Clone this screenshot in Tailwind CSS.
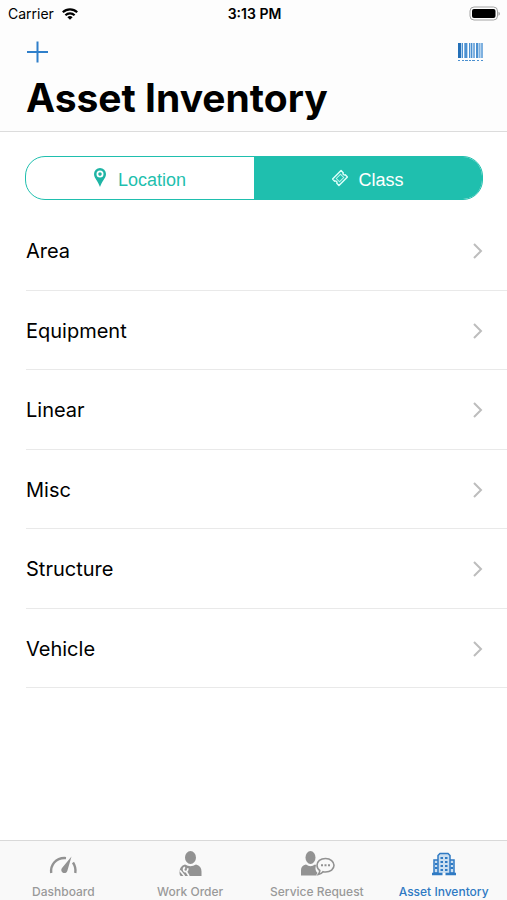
<!DOCTYPE html>
<html lang="en">
<head>
  <meta charset="UTF-8">
  <meta name="viewport" content="width=device-width, initial-scale=1.0">
  <title>Asset Inventory</title>
  <script src="https://cdn.jsdelivr.net/npm/@tailwindcss/browser@4"></script>
</head>
<body class="flex min-h-screen flex-col bg-white font-['Inter','Liberation_Sans',sans-serif] text-black">
  <header class="border-b border-[#dcdcdc] bg-[#fdfdfd]">
    <!-- status bar -->
    <div class="grid h-7 grid-cols-3 items-center pr-1.5 pl-2 text-sm">
      <div class="flex items-center gap-2">
        <span>Carrier</span>
        <svg class="h-3 w-4" viewBox="0 0 16 12" fill="none" stroke="#000" stroke-width="2.2">
          <path d="M0.8 4.3a10.4 10.4 0 0 1 14.4 0" />
          <path d="M3.4 7.2a6.6 6.6 0 0 1 9.2 0" />
          <path d="M8 11.8 5.4 9.2a3.8 3.8 0 0 1 5.2 0z" fill="#000" stroke="none" />
        </svg>
      </div>
      <span class="text-center font-semibold">3:13 PM</span>
      <svg class="h-4 w-8 justify-self-end" viewBox="0 0 32 16">
        <rect x="1" y="1" width="27.500" height="13" rx="4" fill="#fff" stroke="#a3a3a3" />
        <rect x="3" y="3" width="23.500" height="9" rx="2" fill="#000" />
        <path d="M29.500 5.800v4c1.800-.6 1.800-3.400 0-4z" fill="#999" />
      </svg>
    </div>
    <div class="flex h-12 items-center justify-between px-6">
      <button type="button" aria-label="Add asset">
        <svg class="size-7" viewBox="0 0 28 28" stroke="#2f7fca" stroke-width="2">
          <path d="M13.500 3.500v21M3 14h21" />
        </svg>
      </button>
      <button type="button" aria-label="Scan barcode">
        <svg class="h-5 w-6.5" viewBox="0 0 26 20">
          <path fill="#b5d3ee" d="M4 1h22v15H4z" />
          <path fill="#2470b8" d="M1 1h3v15H1z" />
          <path fill="#4b90d0" d="M5 1h1v15H5zM8 1h2v15H8zM12 1h1v15h-1zM14 1h1v15h-1zM19 1h2v15h-2z" />
          <path fill="#7fb1e0" d="M7 1h1v15H7zM16 1h2v15h-2zM22 1h1v15h-1zM24 1h2v15h-2z" />
          <path fill="#fff" d="M6 1h1v15H6zM11 1h1v15h-1zM18 1h1v15h-1z" />
          <path fill="#4b90d0" d="M1 18h2v1H1zM5 18h2v1H5zM8 18h3v1H8zM12 18h2v1h-2zM15 18h3v1h-3zM20 18h2v1h-2zM24 18h2v1h-2z" />
        </svg>
      </button>
    </div>
    <h1 class="px-6.5 pb-[11px] text-[39px] leading-11 font-bold">Asset Inventory</h1>
  </header>

  <main class="flex-1">
    <div class="px-6 pt-6 pb-[11px]">
      <div class="ml-px flex h-11 overflow-hidden rounded-[20px] border border-[#1fbfae] font-['Liberation_Sans',Arial,sans-serif] text-lg">
        <button type="button" class="flex flex-1 items-center justify-center gap-3 pt-1 text-[#1fbfae]">
          <svg class="mb-1 h-5 w-3" viewBox="0 0 12 20">
            <path fill="#1fb5a5" fill-rule="evenodd" d="M6 0a6 6 0 0 0-6 6c0 4 4 7 6 13 2-6 6-9 6-13a6 6 0 0 0-6-6zm0 2.600a3.500 3.500 0 1 1 0 7 3.500 3.500 0 0 1 0-7zm0 1.700a1.800 1.800 0 1 0 0 3.600 1.800 1.800 0 0 0 0-3.600z" />
          </svg>
          Location
        </button>
        <button type="button" class="flex flex-1 items-center justify-center gap-2.5 bg-[#1fbfae] pt-1 text-white" aria-pressed="true">
          <svg class="mb-1 h-5 w-4" viewBox="0 0 16 20" fill="none" stroke="#dcfffa">
            <g transform="rotate(-45 8 10)">
              <path stroke-width="1.500" stroke-linejoin="round" d="M2 5.500h12v3a1.600 1.600 0 0 0 0 3v3H2v-3a1.600 1.600 0 0 0 0-3z" />
              <rect x="5" y="7.700" width="6" height="4.600" stroke-opacity=".8" />
            </g>
          </svg>
          Class
        </button>
      </div>
    </div>

    <nav aria-label="Asset classes">
      <ul class="grid h-[477px] auto-rows-fr pl-6.5 text-xl">
        <li class="border-b border-[#e9e9e9]"><a href="#area" class="flex h-full items-center justify-between pt-0.5 pr-6">Area
          <svg class="h-4 w-2.5" viewBox="0 0 10 16" fill="none" stroke="#bdbdbd" stroke-width="2"><path d="m1 1 7 7-7 7" /></svg></a></li>
        <li class="border-b border-[#e9e9e9]"><a href="#equipment" class="flex h-full items-center justify-between pt-0.5 pr-6">Equipment
          <svg class="h-4 w-2.5" viewBox="0 0 10 16" fill="none" stroke="#bdbdbd" stroke-width="2"><path d="m1 1 7 7-7 7" /></svg></a></li>
        <li class="border-b border-[#e9e9e9]"><a href="#linear" class="flex h-full items-center justify-between pt-0.5 pr-6">Linear
          <svg class="h-4 w-2.5" viewBox="0 0 10 16" fill="none" stroke="#bdbdbd" stroke-width="2"><path d="m1 1 7 7-7 7" /></svg></a></li>
        <li class="border-b border-[#e9e9e9]"><a href="#misc" class="flex h-full items-center justify-between pt-0.5 pr-6">Misc
          <svg class="h-4 w-2.5" viewBox="0 0 10 16" fill="none" stroke="#bdbdbd" stroke-width="2"><path d="m1 1 7 7-7 7" /></svg></a></li>
        <li class="border-b border-[#e9e9e9]"><a href="#structure" class="flex h-full items-center justify-between pt-0.5 pr-6">Structure
          <svg class="h-4 w-2.5" viewBox="0 0 10 16" fill="none" stroke="#bdbdbd" stroke-width="2"><path d="m1 1 7 7-7 7" /></svg></a></li>
        <li class="border-b border-[#e9e9e9]"><a href="#vehicle" class="flex h-full items-center justify-between pt-0.5 pr-6">Vehicle
          <svg class="h-4 w-2.5" viewBox="0 0 10 16" fill="none" stroke="#bdbdbd" stroke-width="2"><path d="m1 1 7 7-7 7" /></svg></a></li>
      </ul>
    </nav>
  </main>

  <!-- tab bar -->
  <nav aria-label="Main" class="grid grid-cols-4 border-t border-[#d9d9d9] bg-[#f9f9f9] pt-[9px] text-xs font-medium text-[#999]">
    <a href="#dashboard" class="flex flex-col items-center gap-1.5">
      <svg class="h-7 w-9" viewBox="0 0 36 28" fill="none" stroke="#929292">
        <path stroke-width="2.400" d="M6.200 23q-.8-6 3-10.500 4.500-5 11.800-4.400M28 12.500q3.200 5 2.300 10.500" />
        <path fill="#929292" stroke="none" d="M26.500 6.500 22.300 21a3.100 3.100 0 1 1-5.300-3z" />
      </svg>
      <span>Dashboard</span>
    </a>
    <a href="#work-order" class="flex flex-col items-center gap-1.5">
      <svg class="h-7 w-9" viewBox="0 0 36 28" fill="#929292">
        <ellipse cx="18.500" cy="7.500" rx="5.500" ry="6.500" />
        <path d="M13 14.500q5.500 3.500 11 0 5.500 1.500 5.500 7V26H9q-1.500 0-1.500-4 0-6 5.500-7.500z" />
        <!-- wrench over the left shoulder -->
        <path fill="none" stroke="#f9f9f9" stroke-width="1.700" d="M13 17.300q-2 1.200-1.200 3.200 1 1.700 3 .8 1.500-1 .8-3M14 21.300l3 4.700M8 20.500l4.500 5.500" />
      </svg>
      <span>Work Order</span>
    </a>
    <a href="#service-request" class="flex flex-col items-center gap-1.5">
      <svg class="h-7 w-9" viewBox="0 0 36 28" fill="#929292">
        <ellipse cx="11.500" cy="7.500" rx="5" ry="6.500" />
        <path d="M7 14.500q4.500 3.500 9 0l1 .5q-1.500 5.500 1.500 8l-1.500 2.500H2V20q0-4.500 5-5.500z" />
        <path fill="none" stroke="#929292" stroke-width="1.600" d="M26.500 8.500c-5 0-8.500 3-8.500 6.800 0 2.200 1 4 2.800 5.200q0 2.200-1.500 4 3-.5 4.700-2.800 1.200.3 2.500.3c5 0 8.500-3 8.500-6.700s-3.500-6.800-8.500-6.800z" />
        <path d="M22 14.300h2v2h-2zM25.500 14.300h2v2h-2zM29 14.300h2v2h-2z" />
      </svg>
      <span>Service Request</span>
    </a>
    <a href="#asset-inventory" class="flex flex-col items-center gap-1.5 text-[#2f7ac3]" aria-current="page">
      <svg class="h-7 w-9" viewBox="0 0 36 28" fill="none" stroke="#2f7ac3">
        <path fill="#9cc3e8" fill-opacity=".5" stroke-width="1.500" d="M12 23V5.500l2-2h8l2 2V23M12 10H8v13h4zM24 10h4v13h-4z" />
        <path stroke-width="2" d="M14.500 8h2.500M19 8h2.500M14.500 12h2.500M19 12h2.500M14.500 16h2.500M19 16h2.500M14.500 20h2.500M19 20h2.500M9 14h2.500M9 18h2.500M24.500 14h2.500M24.500 18h2.500" />
        <path stroke-width="2.500" d="M6 24h10.500M19.500 24H30" />
      </svg>
      <span>Asset Inventory</span>
    </a>
  </nav>
</body>
</html>
